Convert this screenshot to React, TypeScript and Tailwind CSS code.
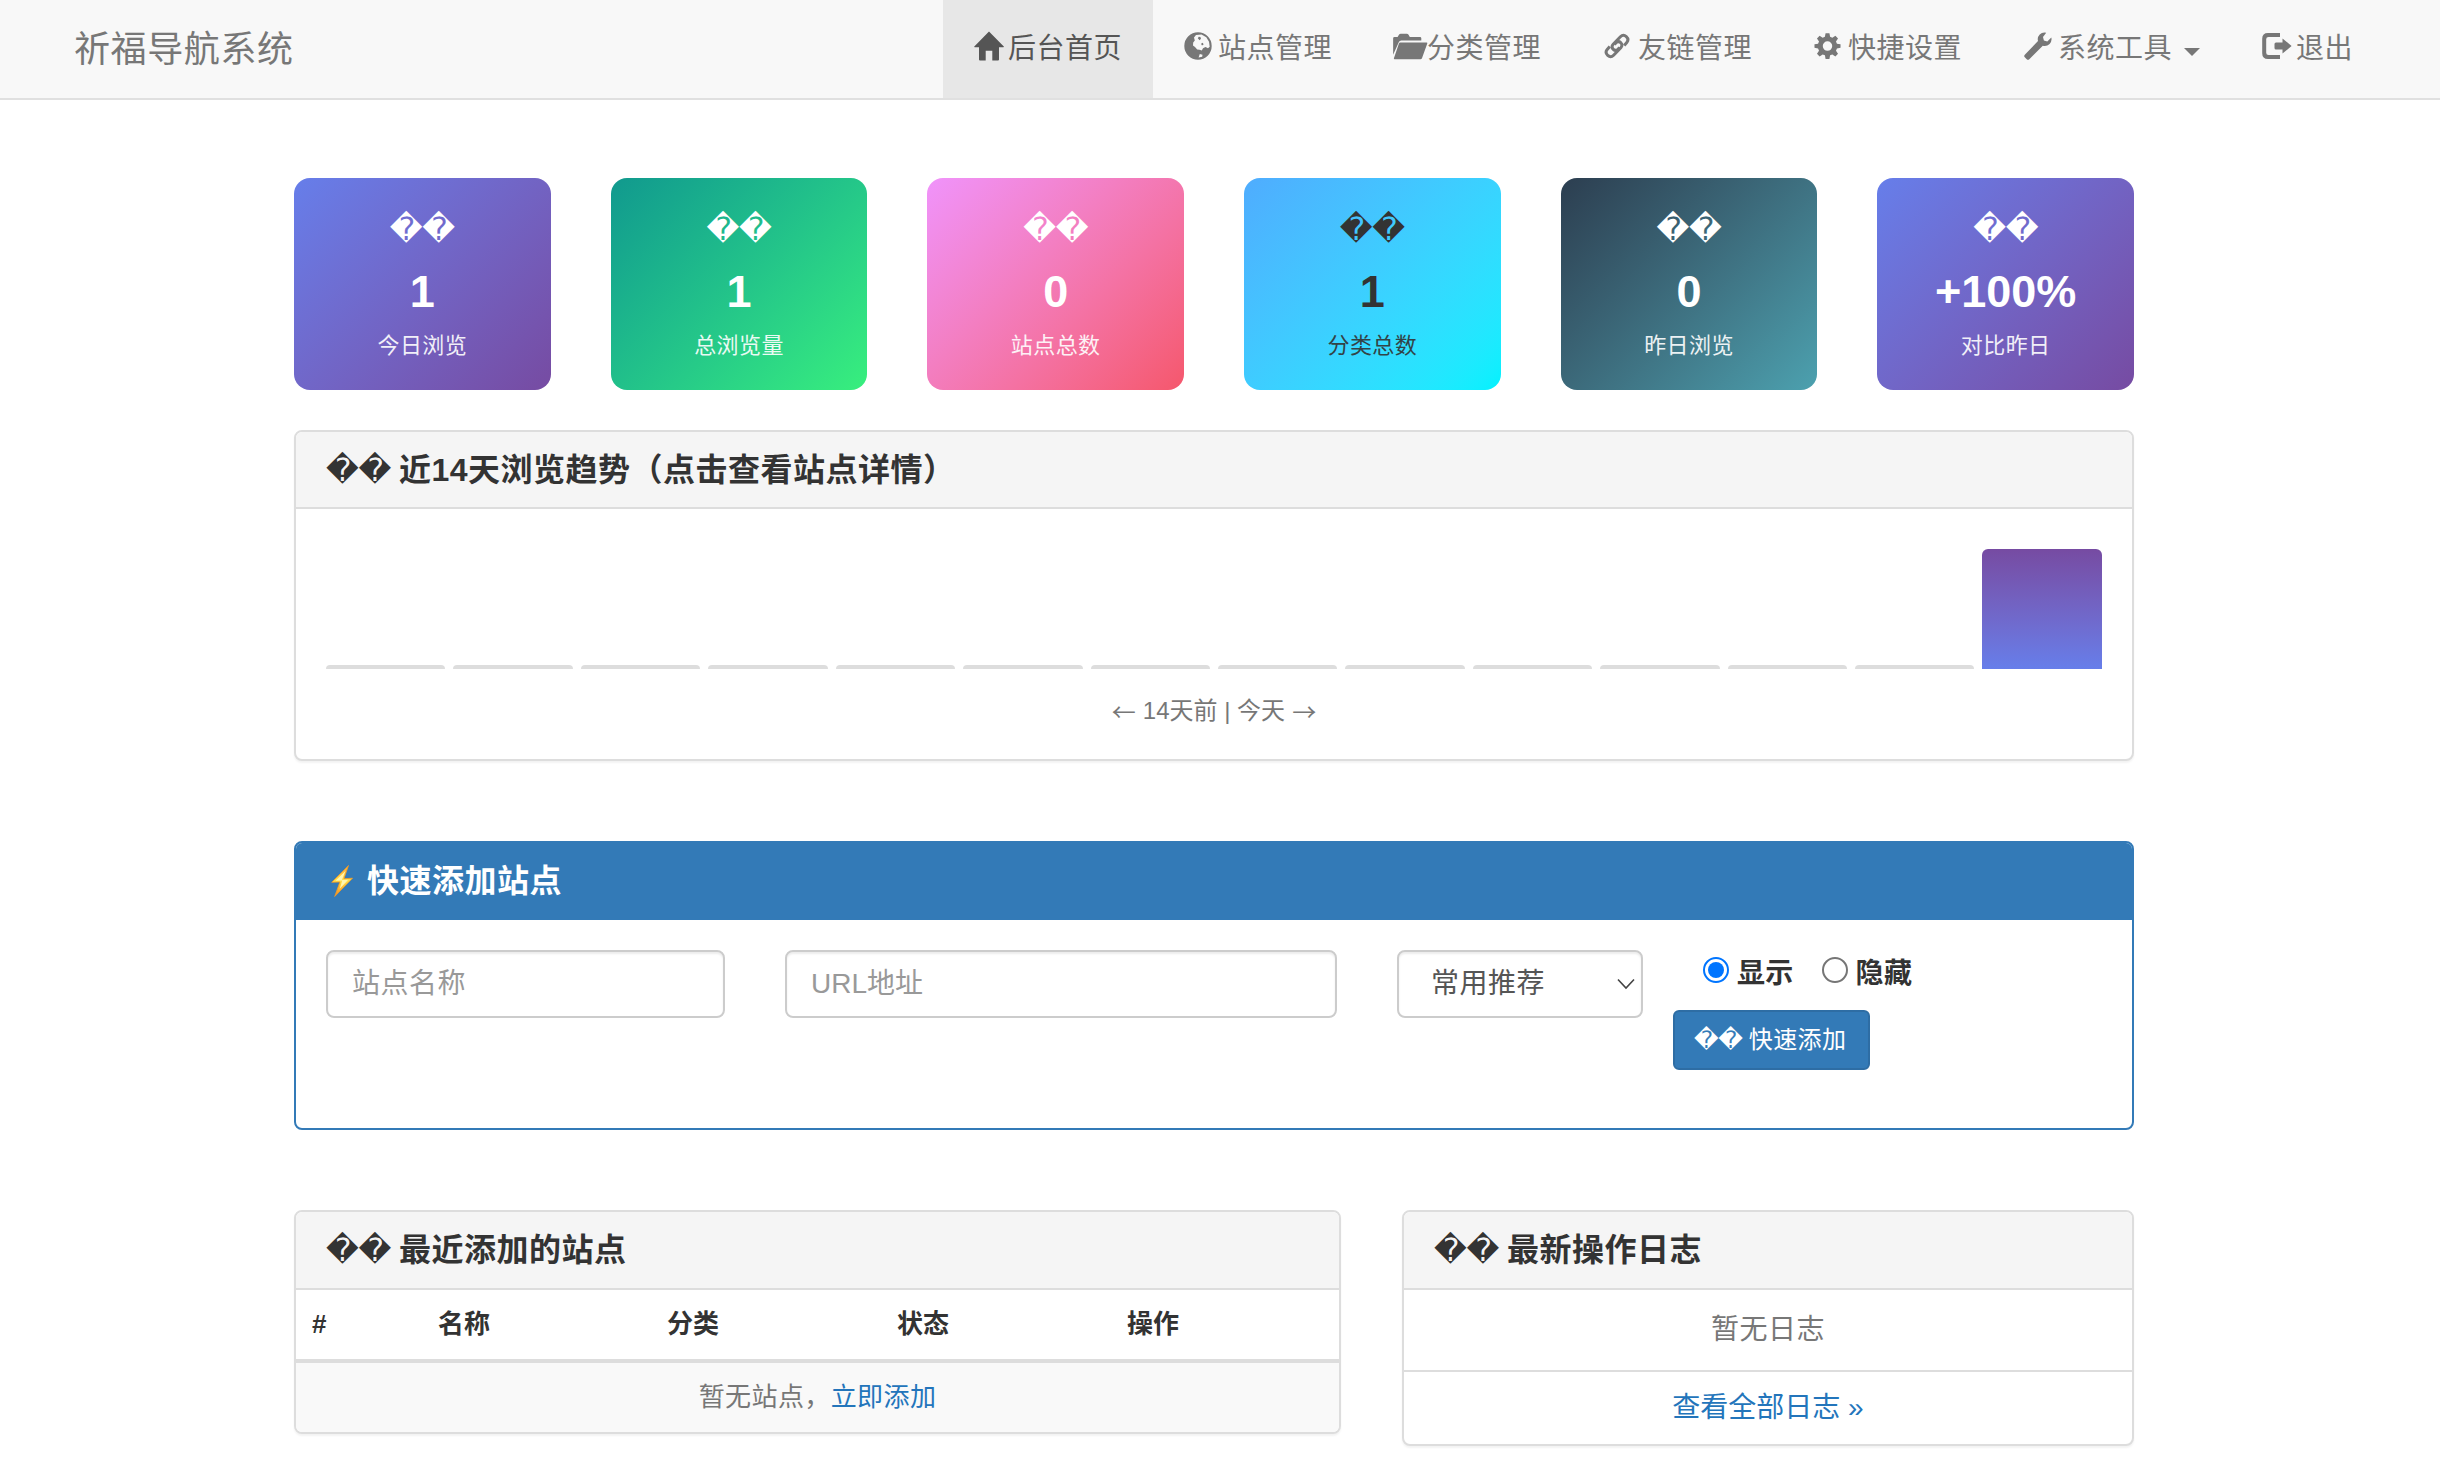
import React from "react";

type IconProps = { className?: string };

const HomeIcon = ({ className }: IconProps) => (
  <svg viewBox="0 0 30 30" className={className} fill="currentColor">
    <path d="M15 .5 29.8 15.4q.5.8-.5.8H25v12.2q0 1-1 1h-5.7v-9.6h-6.6v9.6H6q-1 0-1-1V16.200H.8q-1 0-.5-.8Z" />
  </svg>
);

const GlobeIcon = ({ className }: IconProps) => (
  <svg viewBox="0 0 28 28" className={className} fill="currentColor">
    <path
      fillRule="evenodd"
      d="M14 .3a13.700 13.700 0 1 1 0 27.400A13.700 13.700 0 0 1 14 .3ZM12 3 17.500 2.600 22.300 5.300 25 9.800 25.700 14.800 24 16.200 21.500 15 19 16.200 17.800 18.600 15.500 17.800 13.200 17.400 11 15 9 13.600 9.200 10.400 10.800 8.600 10 5.600ZM13.800 6.200 14.800 4.800 16.400 5 17 6.800 15.600 8.200ZM17 11.800 18.800 10.800 19.600 12.400 18 13.600ZM15.800 22 18.500 22.800 18.200 24.800 14.600 25.600Z"
    />
  </svg>
);

const FolderIcon = ({ className }: IconProps) => (
  <svg viewBox="0 0 36 28" className={className} fill="currentColor">
    <path d="M0 22.500V5.500q0-1.400 1.400-1.400H4.600L6.200 1.600Q6.800.8 7.800.8h6.400q1 0 1.600.8l1.500 2.500h10.500q1.400 0 1.400 1.400v2.300H8.600q-2.200 0-2.900 2Z" />
    <path d="M7.500 9.800H34.600q1.200 0 .8 1.200l-5.500 15.200q-.4 1.100-1.600 1.100H1.600q-1.100 0-.8-1.100L6 10.900q.4-1.100 1.500-1.100Z" />
  </svg>
);

const LinkIcon = ({ className }: IconProps) => (
  <svg viewBox="0 0 26 28" className={className} fill="none" stroke="currentColor" strokeWidth="3">
    <path d="M20.200 13.400 22.800 10.400q2.500-3-.5-5.800-3-2.700-5.900.2l-7.200 7.500q-2.400 2.800.2 5.200 1.900 1.600 4 .3l2.200-2.300" />
    <path d="M5.800 14.600 3.200 17.600q-2.500 3 .5 5.800 3 2.700 5.900-.2l7.200-7.500q2.400-2.800-.2-5.200-1.900-1.600-4-.3l-2.200 2.300" />
  </svg>
);

const CogIcon = ({ className }: IconProps) => (
  <svg viewBox="0 0 28 28" className={className} fill="currentColor">
    <path
      fillRule="evenodd"
      d="M12 .8h4l.7 3.700 2.300 1 3.200-2.100 2.700 2.700-2.100 3.200 1 2.300 3.700.7v3.600l-3.700.7-1 2.300 2.100 3.200-2.700 2.700-3.200-2.100-2.300 1-.7 3.700h-4l-.7-3.700-2.300-1-3.200 2.100-2.700-2.700 2.100-3.200-1-2.300-3.700-.7v-3.600l3.700-.7 1-2.300-2.100-3.200 2.700-2.700 3.200 2.100 2.300-1ZM14 9.200a4.900 4.900 0 1 0 0 9.800 4.900 4.900 0 0 0 0-9.800Z"
    />
  </svg>
);

const WrenchIcon = ({ className }: IconProps) => (
  <svg viewBox="0 0 28 28" className={className} fill="currentColor">
    <path d="M22.200.7q-3.600-1-6.500 1.700-2.700 2.800-1.700 6.700L.8 22.700q-1.200 1.300 0 2.600l1.900 1.900q1.300 1.200 2.600 0L18.800 13.700q3.900 1 6.800-1.800 2.700-2.900 1.700-6.500l-4 4-3.400-.9-.9-3.500Z" />
  </svg>
);

const LogoutIcon = ({ className }: IconProps) => (
  <svg viewBox="0 0 30 28" className={className} fill="currentColor">
    <path d="M18 1v4H6.500Q4.200 5 4.200 7.300v13.400Q4.200 23 6.500 23H18v4H6Q.2 27 .2 21.200V6.800Q.2 1 6 1Z" />
    <path d="M20.500 6.400 29.600 14l-9.100 7.600v-4.200H14q-1.500 0-1.500-1.500v-3.800q0-1.500 1.500-1.500h6.500Z" />
  </svg>
);

const Bolt = () => (
  <svg viewBox="0 0 22 32" className="h-8 w-[22px]">
    <defs>
      <linearGradient id="bolt" x1="0" y1="0" x2="0" y2="1">
        <stop offset="0" stopColor="#f9a63a" />
        <stop offset=".5" stopColor="#ffe14a" />
        <stop offset="1" stopColor="#f58a1f" />
      </linearGradient>
    </defs>
    <path d="M17.500.5.700 17.300l8.200-.3L3.700 31.500 21.500 13.200l-8.600.5Z" fill="url(#bolt)" stroke="#f39a26" strokeWidth=".8" />
    <path d="M14.500 6 4.500 15.800l6.800-.2-2.600 8.200 8.500-9-6.400.3Z" fill="#fff6b0" />
  </svg>
);

const Unknown = () => (
  <span className="font-['DejaVu_Sans'] font-normal tracking-[-0.01em]">{"\uFFFD\uFFFD"}</span>
);

const navItems = [
  { label: "后台首页", Icon: HomeIcon, box: "w-[210px] bg-[#e7e7e7] text-[#555]", icon: "w-[30px] h-[30px]" },
  { label: "站点管理", Icon: GlobeIcon, box: "w-[209px]", icon: "w-7 h-7" },
  { label: "分类管理", Icon: FolderIcon, box: "w-[211px]", icon: "w-[35px] h-[27px]" },
  { label: "友链管理", Icon: LinkIcon, box: "w-[210px]", icon: "w-[26px] h-7" },
  { label: "快捷设置", Icon: CogIcon, box: "w-[210px]", icon: "w-[27px] h-7" },
  { label: "系统工具", Icon: WrenchIcon, box: "w-[238px]", icon: "w-7 h-7", caret: true },
  { label: "退出", Icon: LogoutIcon, box: "w-[151px]", icon: "w-[30px] h-7" },
];

const stats = [
  { value: "1", label: "今日浏览", look: "from-[#667eea] to-[#764ba2] text-white" },
  { value: "1", label: "总浏览量", look: "from-[#11998e] to-[#38ef7d] text-white" },
  { value: "0", label: "站点总数", look: "from-[#f093fb] to-[#f5576c] text-white" },
  { value: "1", label: "分类总数", look: "from-[#4facfe] to-[#00f2fe] text-[#333]" },
  { value: "0", label: "昨日浏览", look: "from-[#2c3e50] to-[#4ca1af] text-white" },
  { value: "+100%", label: "对比昨日", look: "from-[#667eea] to-[#764ba2] text-white" },
];

const views = [0, 0, 0, 0, 0, 0, 0, 0, 0, 0, 0, 0, 0, 1];

const panel = "overflow-hidden rounded-lg border-2 border-[#ddd] bg-white shadow-[0_2px_2px_rgba(0,0,0,0.05)]";

function PanelHeading({ children, height = "h-[78px]" }: { children: React.ReactNode; height?: string }) {
  return (
    <div
      className={`flex items-center gap-2 border-b-2 border-[#ddd] bg-[#f5f5f5] px-[30px] text-[32px] font-semibold text-[#333] ${height}`}
    >
      <Unknown />
      <span className="tracking-[0.5px]">{children}</span>
    </div>
  );
}

function Radio({ label, checked }: { label: string; checked?: boolean }) {
  return (
    <label className="flex items-center gap-2 text-[28px] leading-[40px] font-bold">
      <span
        className={
          checked
            ? "mb-2 flex size-[26px] items-center justify-center rounded-full border-2 border-[#0075ff]"
            : "mb-2 flex size-[26px] items-center justify-center rounded-full border-2 border-[#767676]"
        }
      >
        {checked && <span className="size-4 rounded-full bg-[#0075ff]" />}
      </span>
      {label}
    </label>
  );
}

export default function App() {
  return (
    <div className="h-[1482px] w-[2440px] overflow-hidden bg-white font-['Liberation_Sans','Noto_Sans_CJK_SC',sans-serif] text-[#333]">
      <nav className="flex h-[100px] justify-between border-b-2 border-[#e0e0e0] bg-[#f8f8f8] pr-[58px] pl-[74px] text-[28px] text-[#777]">
        <div className="flex items-center pt-0.5 text-[36px] tracking-[0.6px]">祈福导航系统</div>
        <div className="flex">
          {navItems.map(({ label, Icon, box, icon, caret }) => (
            <a key={label} className={`flex h-[98px] items-center ${box}`}>
              <span className="flex w-[65px] shrink-0 justify-start pb-1.5 pl-[31px]">
                <Icon className={`shrink-0 ${icon}`} />
              </span>
              <span className="tracking-[0.5px] whitespace-nowrap">{label}</span>
              {caret && (
                <span className="mt-1.5 ml-3 border-x-8 border-t-8 border-x-transparent border-t-[#777]" />
              )}
            </a>
          ))}
        </div>
      </nav>

      <main className="mt-[78px] ml-[294px] w-[1840px]">
        <section className="grid grid-cols-6 gap-[60px]">
          {stats.map((s) => (
            <div key={s.label} className={`flex h-[212px] flex-col items-center rounded-2xl bg-linear-135 ${s.look}`}>
              <div className="mt-[31px] text-[32px] leading-[40px]">
                <Unknown />
              </div>
              <div className="mt-[17px] text-[45px] leading-[52px] font-bold">{s.value}</div>
              <div className="mt-3 text-[22px] leading-[32px] tracking-[0.4px] opacity-90">{s.label}</div>
            </div>
          ))}
        </section>

        <section className={`mt-10 h-[331px] ${panel}`}>
          <PanelHeading height="h-[77px]">近14天浏览趋势（点击查看站点详情）</PanelHeading>
          <div className="mt-10 flex h-[120px] items-end gap-2 px-[30px]">
            {views.map((v, i) => (
              <div
                key={i}
                className={
                  v
                    ? "h-full flex-1 rounded-t-md bg-linear-to-t from-[#667eea] to-[#764ba2]"
                    : "h-1 flex-1 rounded-t-md bg-[#ddd]"
                }
              />
            ))}
          </div>
          <div className="mt-6 flex justify-center gap-[7px] text-[24px] leading-[36px] text-[#777]">
            <span className="font-['Noto_Sans_CJK_SC']">←</span>
            <span>14天前 | 今天</span>
            <span className="font-['Noto_Sans_CJK_SC']">→</span>
          </div>
        </section>

        <section className="mt-20 h-[289px] overflow-hidden rounded-lg border-2 border-[#337ab7] bg-white">
          <div className="flex h-[77px] items-center bg-[#337ab7] px-[35px] pb-0.5 text-[32px] font-semibold text-white">
            <Bolt />
            <span className="ml-3.5 tracking-[0.5px]">快速添加站点</span>
          </div>
          <div className="flex px-[30px] pt-[30px] text-[28px]">
            <div className="flex h-[68px] w-[399px] items-center rounded-lg border-2 border-[#ccc] px-6 tracking-[0.5px] text-[#999] shadow-[inset_0_2px_2px_rgba(0,0,0,0.075)]">
              站点名称
            </div>
            <div className="ml-[60px] flex h-[68px] w-[552px] items-center rounded-lg border-2 border-[#ccc] px-6 text-[#999] shadow-[inset_0_2px_2px_rgba(0,0,0,0.075)]">
              URL地址
            </div>
            <div className="ml-[60px] flex h-[68px] w-[246px] items-center justify-between rounded-lg border-2 border-[#ccc] pr-1.5 pl-8 tracking-[0.5px] text-[#555] shadow-[inset_0_2px_2px_rgba(0,0,0,0.075)]">
              常用推荐
              <svg viewBox="0 0 18 12" className="h-3 w-[18px]" fill="none" stroke="#444" strokeWidth="1.600">
                <path d="M1 1.500 9 10l8-8.500" />
              </svg>
            </div>
            <div className="ml-[30px] flex flex-col items-start">
              <div className="flex gap-7 pt-1 pl-[30px] tracking-[0.3px]">
                <Radio label="显示" checked />
                <Radio label="隐藏" />
              </div>
              <button className="mt-4 flex h-[60px] w-[197px] items-center gap-1.5 rounded-md border-2 border-[#2e6da4] bg-[#337ab7] pl-[19px] text-[24px] whitespace-nowrap text-white">
                <Unknown />
                <span className="tracking-[0.4px]">快速添加</span>
              </button>
            </div>
          </div>
        </section>

        <div className="mt-20 flex items-start justify-between">
          <section className={`h-[224px] w-[1047px] ${panel}`}>
            <PanelHeading>最近添加的站点</PanelHeading>
            <div className="flex h-[73px] items-center border-b-4 border-[#ddd] pl-4 text-[26px] font-bold">
              <span className="w-[126px]">#</span>
              <span className="w-[229px]">名称</span>
              <span className="w-[230px]">分类</span>
              <span className="w-[230px]">状态</span>
              <span>操作</span>
            </div>
            <div className="flex h-[69px] items-center justify-center bg-[#f9f9f9] text-[26px] tracking-[0.4px] text-[#777]">
              暂无站点，<a className="text-[#2375bb]">立即添加</a>
            </div>
          </section>

          <section className={`h-[236px] w-[732px] ${panel}`}>
            <PanelHeading>最新操作日志</PanelHeading>
            <div className="flex h-[82px] items-center justify-center border-b-2 border-[#ddd] text-[28px] tracking-[0.5px] text-[#777]">
              暂无日志
            </div>
            <div className="flex h-[72px] items-center justify-center text-[28px] text-[#2375bb]">
              <a>查看全部日志 »</a>
            </div>
          </section>
        </div>
      </main>
    </div>
  );
}
